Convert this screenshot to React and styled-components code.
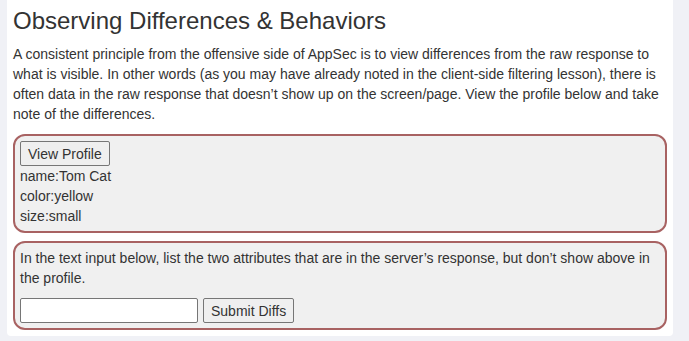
import React from "react";
import styled, { createGlobalStyle } from "styled-components";

const GlobalStyle = createGlobalStyle`
	html, body {
		margin: 0;
		padding: 0;
		background: #f0f1f6;
	}
	body {
		font-family: "Liberation Sans", Arial, Helvetica, sans-serif;
		font-size: 14px;
		line-height: 20px;
		color: #333;
	}
`;

const Page = styled.div`
	padding: 0 16px 5px 7px;
`;

const Card = styled.section`
	background: #fff;
	padding: 8px 6px 6px;
	border-radius: 0 0 4px 4px;
`;

const Title = styled.h3`
	margin: 0 0 10px;
	font-size: 24px;
	font-weight: 400;
	line-height: 26.4px;
	color: #333;
`;

const Text = styled.p`
	margin: 0 0 10px;
`;

const Attack = styled.div`
	background: #f0f0f0;
	border: 2px solid #a86262;
	border-radius: 12px;
	padding: 5px;
	margin-bottom: ${(p) => (p.$last ? "0" : "8px")};
`;

const Button = styled.button`
	display: block;
	height: 25px;
	padding: 0 7px;
	font-family: inherit;
	font-size: 14px;
	color: #333;
	background: #efefef;
	border: 1px solid #767676;
	border-radius: 2px;
`;

const Row = styled.form`
	display: flex;
	align-items: center;
	gap: 5px;
	margin: 0;
`;

const Field = styled.input`
	width: 178px;
	height: 25px;
	box-sizing: border-box;
	background: #fff;
	border: 1px solid #767676;
	border-radius: 2px;
	padding: 1px 2px;
	font-family: inherit;
	font-size: 14px;
`;

const Line = styled.div``;

const App = () => {
	const profile = [
		["name", "Tom Cat"],
		["color", "yellow"],
		["size", "small"],
	];

	return (
		<Page>
			<GlobalStyle />
			<Card>
				<Title>Observing Differences &amp; Behaviors</Title>
				<Text>
					A consistent principle from the offensive side of AppSec is to
					view differences from the raw response to what is visible. In
					other words (as you may have already noted in the client-side
					filtering lesson), there is often data in the raw response that
					doesn’t show up on the screen/page. View the profile below and
					take note of the differences.
				</Text>

				<Attack>
					<Button type='button'>View Profile</Button>
					{profile.map(([k, v]) => (
						<Line key={k}>
							{k}:{v}
						</Line>
					))}
				</Attack>

				<Attack $last>
					<Text>
						In the text input below, list the two attributes that are in
						the server’s response, but don’t show above in the profile.
					</Text>
					<Row onSubmit={(e) => e.preventDefault()}>
						<Field type='text' />
						<Button type='submit'>Submit Diffs</Button>
					</Row>
				</Attack>
			</Card>
		</Page>
	);
};

export default App;
